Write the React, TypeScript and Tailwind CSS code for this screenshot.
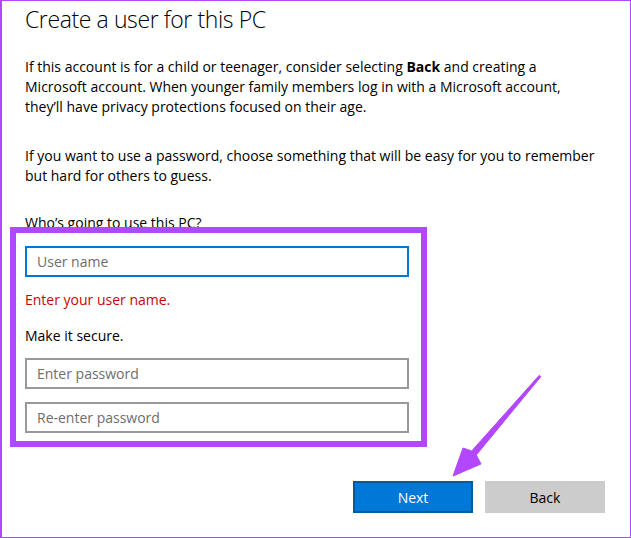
import React from "react";

const FONT = { fontFamily: '"Open Sans", "Noto Sans", Arial, sans-serif' };

function Field({ placeholder, focused }: { placeholder: string; focused?: boolean }) {
  return (
    <div
      className={`flex h-[31px] w-[384px] items-center border-2 bg-white px-[10px] text-[14px] text-[#6d6d6d] ${
        focused ? "border-[#0078d7]" : "border-[#999999]"
      }`}
    >
      {placeholder}
    </div>
  );
}

export default function App() {
  return (
    <div
      className="relative h-[538px] w-[631px] overflow-hidden border border-l-2 border-[#b347fe] bg-white text-black"
      style={FONT}
    >
      <div className="pl-[23px] pt-[2px]">
        <h1 className="text-[23px] font-light leading-[32px] tracking-[-0.4px]">Create a user for this PC</h1>

        <p className="mt-[22px] whitespace-nowrap text-[14px] leading-[20px]">
          If this account is for a child or teenager, consider selecting <b>Back</b> and creating a
          <br />
          Microsoft account. When younger family members log in with a Microsoft account,
          <br />
          they’ll have privacy protections focused on their age.
        </p>

        <p className="mt-[29px] whitespace-nowrap text-[14px] leading-[20px]">
          If you want to use a password, choose something that will be easy for you to remember
          <br />
          but hard for others to guess.
        </p>

        <p className="mt-[27px] text-[14px] leading-[20px]">Who’s going to use this PC?</p>
      </div>

      {/* highlighted form group */}
      <div className="relative -mt-[6px] ml-[8px] w-[417px] border-[6px] border-[#b347fe] bg-white pb-[8px] pl-[9px] pr-[12px] pt-[13px]">
        <Field placeholder="User name" focused />
        <p className="mt-[13px] text-[14px] leading-[20px] text-[#c50500]">Enter your user name.</p>
        <p className="mt-[16px] text-[14px] leading-[20px]">Make it secure.</p>
        <div className="mt-[12px] flex flex-col gap-[13px]">
          <Field placeholder="Enter password" />
          <Field placeholder="Re-enter password" />
        </div>
      </div>

      <div className="mr-[25px] mt-[34px] flex justify-end gap-[12px]">
        <button
          type="button"
          className="h-[32px] w-[120px] border-2 border-[#005a9e] bg-[#0078d7] text-[14px] text-white"
        >
          Next
        </button>
        <button type="button" className="h-[32px] w-[120px] bg-[#cccccc] text-[14px] text-black">
          Back
        </button>
      </div>

      <svg
        className="pointer-events-none absolute left-0 top-0"
        width="631"
        height="538"
        viewBox="0 0 631 538"
      >
        <polygon
          points="537.3,374.3 538.8,375.7 474.3,454 479,463 451,475 461,447 469.7,450"
          fill="#b347fe"
          stroke="#b347fe"
          strokeWidth="1"
          strokeLinejoin="round"
        />
      </svg>
    </div>
  );
}
